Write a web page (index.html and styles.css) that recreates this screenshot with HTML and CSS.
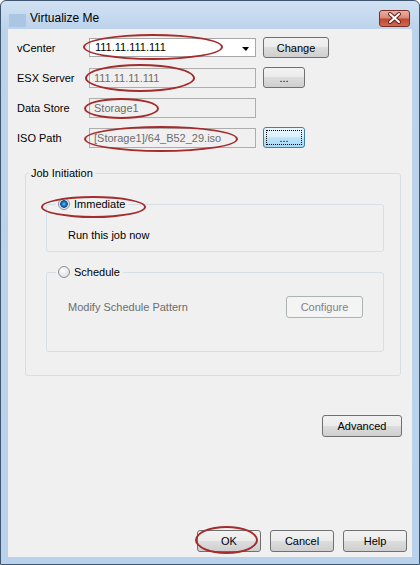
FILE: index.html
```html
<!DOCTYPE html>
<html lang="en">
<head>
    <meta charset="UTF-8">
    <title>Virtualize Me</title>
    <link rel="stylesheet" href="styles.css">
</head>
<body>
    <div class="window">
        <div class="titlebar">
            <span class="title-icon"></span>
            <span class="title-text">Virtualize Me</span>
            <span class="close-btn">
                <svg width="29" height="15" viewBox="0 0 29 15">
                    <path d="M10 3 L19 11 M19 3 L10 11" stroke="#5b2119" stroke-width="4" stroke-linecap="round"/>
                    <path d="M10 3 L19 11 M19 3 L10 11" stroke="#ffffff" stroke-width="2" stroke-linecap="round"/>
                </svg>
            </span>
        </div>

        <div class="client">
            <div class="form-grid">
                <label>vCenter</label>
                <div class="field">
                    <div class="combo"><span>111.11.111.111</span><span class="combo-arrow"></span></div>
                    <span class="mark mark-vcenter"></span>
                </div>
                <button class="btn btn-change">Change</button>

                <label>ESX Server</label>
                <div class="field">
                    <div class="textbox">111.11.11.111</div>
                    <span class="mark mark-esx"></span>
                </div>
                <button class="btn btn-browse">...</button>

                <label>Data Store</label>
                <div class="field">
                    <div class="textbox">Storage1</div>
                    <span class="mark mark-store"></span>
                </div>
                <span></span>

                <label>ISO Path</label>
                <div class="field">
                    <div class="textbox">[Storage1]/64_B52_29.iso</div>
                    <span class="mark mark-iso"></span>
                </div>
                <button class="btn btn-browse btn-focus">...</button>
            </div>

            <fieldset class="group">
                <legend>Job Initiation</legend>

                <fieldset class="subgroup sub-immediate">
                    <legend><span class="radio checked"></span>Immediate<span class="mark mark-immediate"></span></legend>
                    <p class="sub-text">Run this job now</p>
                </fieldset>

                <fieldset class="subgroup sub-schedule">
                    <legend><span class="radio"></span>Schedule</legend>
                    <div class="schedule-row">
                        <span class="disabled-text">Modify Schedule Pattern</span>
                        <button class="btn btn-configure" disabled>Configure</button>
                    </div>
                </fieldset>
            </fieldset>

            <div class="advanced-row">
                <button class="btn btn-advanced">Advanced</button>
            </div>

            <div class="footer-buttons">
                <span class="btn-wrap">
                    <button class="btn btn-dialog">OK</button>
                    <span class="mark mark-ok"></span>
                </span>
                <button class="btn btn-dialog">Cancel</button>
                <button class="btn btn-dialog">Help</button>
            </div>
        </div>
    </div>
</body>
</html>
```

FILE: styles.css
```css
body {
    margin: 0;
    font-family: "Liberation Sans", Arial, sans-serif;
    font-size: 11px;
    color: #000;
}

/* --- WINDOW FRAME --- */
.window {
    width: 420px;
    height: 565px;
    box-sizing: border-box;
    border: 1px solid #3e5670;
    border-radius: 6px 6px 0 0;
    background: linear-gradient(#d2e1f3, #bcd3eb 28px, #b9d1ea);
    display: flex;
    flex-direction: column;
}
.titlebar {
    height: 28px;
    flex: none;
    display: flex;
    align-items: flex-start;
    padding: 0 9px 0 8px;
    box-sizing: border-box;
}
.title-icon {
    width: 17px;
    height: 13px;
    margin-top: 13px;
    background: #abc6e3;
}
.title-text {
    font-size: 12px;
    line-height: 15px;
    margin: 10px 0 0 4px;
}
.close-btn {
    margin-left: auto;
    margin-top: 9px;
    width: 31px;
    height: 17px;
    box-sizing: border-box;
    border: 1px solid #7a3026;
    border-radius: 3px;
    background: linear-gradient(#eab0a3, #d98a78 45%, #c4452f 55%, #cd6b52);
    display: flex;
}

/* --- CLIENT AREA --- */
.client {
    flex: 1;
    margin: 0 7px 7px;
    background: #f0f0f0;
    display: flex;
    flex-direction: column;
}
.form-grid {
    display: grid;
    grid-template-columns: 72px 174px auto;
    grid-auto-rows: 21px;
    row-gap: 9px;
    align-items: center;
    justify-items: start;
    padding: 8px 0 0 9px;
}
.field {
    position: relative;
    width: 167px;
}
.textbox,
.combo {
    box-sizing: border-box;
    width: 167px;
    height: 20px;
    line-height: 18px;
    border: 1px solid #adadad;
    background: #f0f0f0;
    color: #6d6d6d;
    padding: 0 4px;
    white-space: nowrap;
}
.combo {
    height: 19px;
    line-height: 17px;
    background: #fff;
    color: #000;
    border-color: #a7a7a7;
    display: flex;
    justify-content: space-between;
    align-items: center;
    padding: 0 6px 0 5px;
}
.combo-arrow {
    width: 0;
    height: 0;
    border-left: 4px solid transparent;
    border-right: 3px solid transparent;
    border-top: 4px solid #000;
    margin-top: 3px;
}

/* --- BUTTONS --- */
.btn {
    font: inherit;
    color: #000;
    box-sizing: border-box;
    height: 21px;
    padding: 0;
    border: 1px solid #707070;
    border-radius: 3px;
    background: linear-gradient(#f2f2f2, #ebebeb 50%, #dddddd 50%, #cfcfcf);
}
.btn-change { width: 66px; }
.btn-browse { width: 42px; }
.btn-focus {
    position: relative;
    border-color: #3c7fb1;
    background: linear-gradient(#eaf6fd, #d9f0fc 50%, #bee6fd 50%, #a7d9f5);
}
.btn-focus::after {
    content: "";
    position: absolute;
    inset: 2px;
    border: 1px dotted #000;
}
.btn-configure {
    width: 77px;
    height: 22px;
    border-color: #adb2b5;
    background: #f4f4f4;
    color: #838383;
}
.btn-advanced {
    width: 80px;
    height: 22px;
}
.btn-dialog {
    width: 64px;
    height: 22px;
}

/* --- GROUP BOXES --- */
.group {
    margin: 18px 0 0 17px;
    width: 376px;
    box-sizing: border-box;
    border: 1px solid #d5dfe5;
    border-radius: 3px;
    padding: 17px 0 23px 3px;
    min-width: 0;
}
.group legend,
.subgroup legend {
    padding: 0 2px;
    line-height: 14px;
}
.subgroup {
    margin: 0 16px 0 17px;
    border: 1px solid #d5dfe5;
    border-radius: 3px;
    padding: 17px 20px 9px 9px;
    min-width: 0;
}
.subgroup legend {
    position: relative;
    padding-right: 3px;
}
.sub-schedule {
    margin-top: 13px;
    padding-bottom: 33px;
}
.sub-text {
    margin: 0 0 0 12px;
    line-height: 14px;
}
.schedule-row {
    display: flex;
    justify-content: space-between;
    align-items: center;
    margin-left: 12px;
    height: 22px;
}
.disabled-text {
    color: #6d6d6d;
}
.radio {
    display: inline-block;
    width: 12px;
    height: 12px;
    box-sizing: border-box;
    border-radius: 50%;
    border: 1px solid #8d8f92;
    background: radial-gradient(circle at 40% 35%, #ffffff, #d4d4d4);
    vertical-align: -2px;
    margin-right: 4px;
}
.radio.checked {
    background: radial-gradient(circle at 50% 50%, #74c6f4 0, #2389cc 1.5px, #0b4d8c 3.5px, #cfd6dc 4px, #f6f6f6 5px);
}

/* --- BOTTOM BUTTONS --- */
.advanced-row {
    display: flex;
    justify-content: flex-end;
    margin-top: 39px;
    padding-right: 10px;
}
.footer-buttons {
    margin-top: auto;
    display: flex;
    justify-content: flex-end;
    gap: 9px;
    padding: 0 5px 5px 0;
}
.btn-wrap {
    position: relative;
    display: flex;
}

/* --- RED HIGHLIGHT RINGS --- */
.mark {
    position: absolute;
    box-sizing: border-box;
    border: 2px solid #a32c2c;
    border-radius: 50%;
    pointer-events: none;
}
.mark-vcenter { left: -6px; top: -4px; width: 140px; height: 26px; }
.mark-esx { left: -4px; top: -4px; width: 110px; height: 28px; }
.mark-store { left: -5px; top: 0; width: 75px; height: 21px; }
.mark-iso { left: -5px; top: -2px; width: 154px; height: 26px; }
.mark-immediate { left: -15px; top: -1px; width: 105px; height: 22px; }
.mark-ok { left: -2px; top: -4px; width: 63px; height: 28px; }
```
